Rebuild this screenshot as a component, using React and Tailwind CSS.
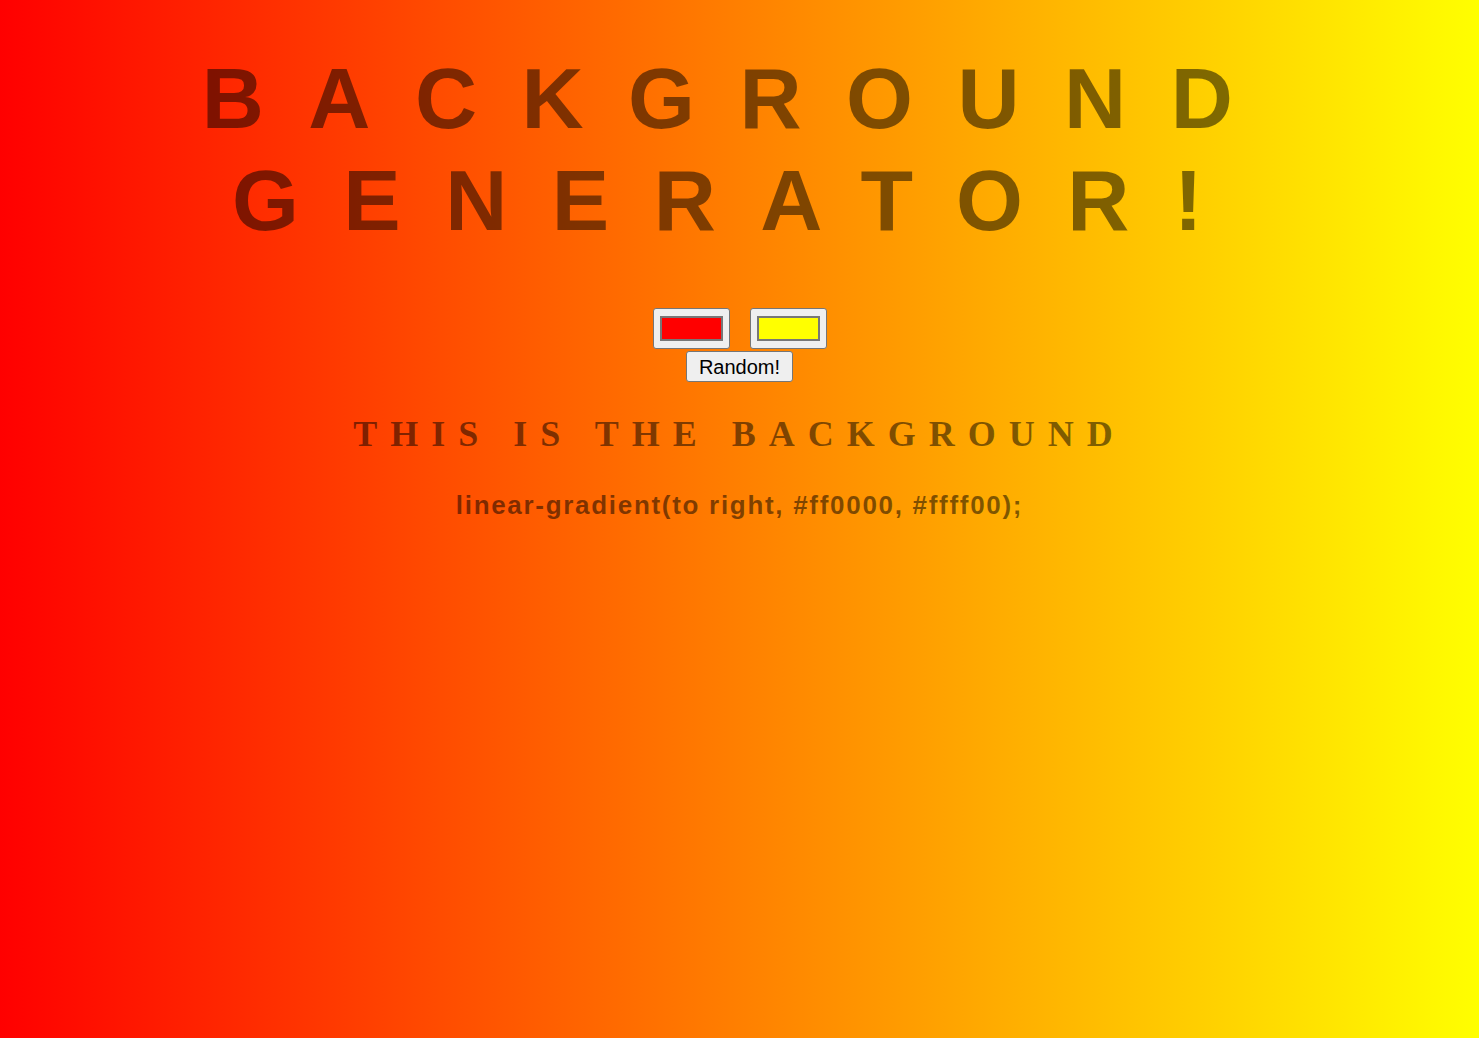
import { useState } from 'react'

function ColorBox({ value }) {
  return (
    <div className="w-[77px] h-[41px] rounded-[3px] border-[1.5px] border-[#767676] bg-[#efefef] px-[6px] py-[7px] box-border">
      <div className="w-full h-full border-2 border-[#777777]" style={{ backgroundColor: value }} />
    </div>
  )
}

export default function App() {
  const [color1] = useState('#ff0000')
  const [color2] = useState('#ffff00')
  const css = `linear-gradient(to right, ${color1}, ${color2});`

  return (
    <div
      className="min-h-screen w-full text-center text-black/50 font-['Liberation_Sans',Arial,sans-serif]"
      style={{ background: `linear-gradient(to right, ${color1}, ${color2})` }}
    >
      <div className="pt-[47px]">
        <h1 className="text-[86px] leading-[102px] font-bold tracking-[44.5px] uppercase">
          <span className="block">Background</span>
          <span className="block">Generator!</span>
        </h1>

        <div className="mt-[57px] flex justify-center gap-[20px]">
          <ColorBox value={color1} />
          <ColorBox value={color2} />
        </div>
        <button
          type="button"
          className="mt-[2px] h-[31px] px-[12px] rounded-[3px] border-[1.5px] border-[#767676] bg-[#efefef] text-black text-[20px] leading-none font-['Liberation_Sans',Arial,sans-serif]"
        >
          Random!
        </button>

        <h3 className="mt-[31px] text-[36px] leading-[42px] font-bold tracking-[13px] uppercase font-['Liberation_Serif','Times_New_Roman',serif]">
          This is the background
        </h3>

        <p className="mt-[36px] text-[26px] leading-[28px] font-bold tracking-[1.7px]">{css}</p>
      </div>
    </div>
  )
}
